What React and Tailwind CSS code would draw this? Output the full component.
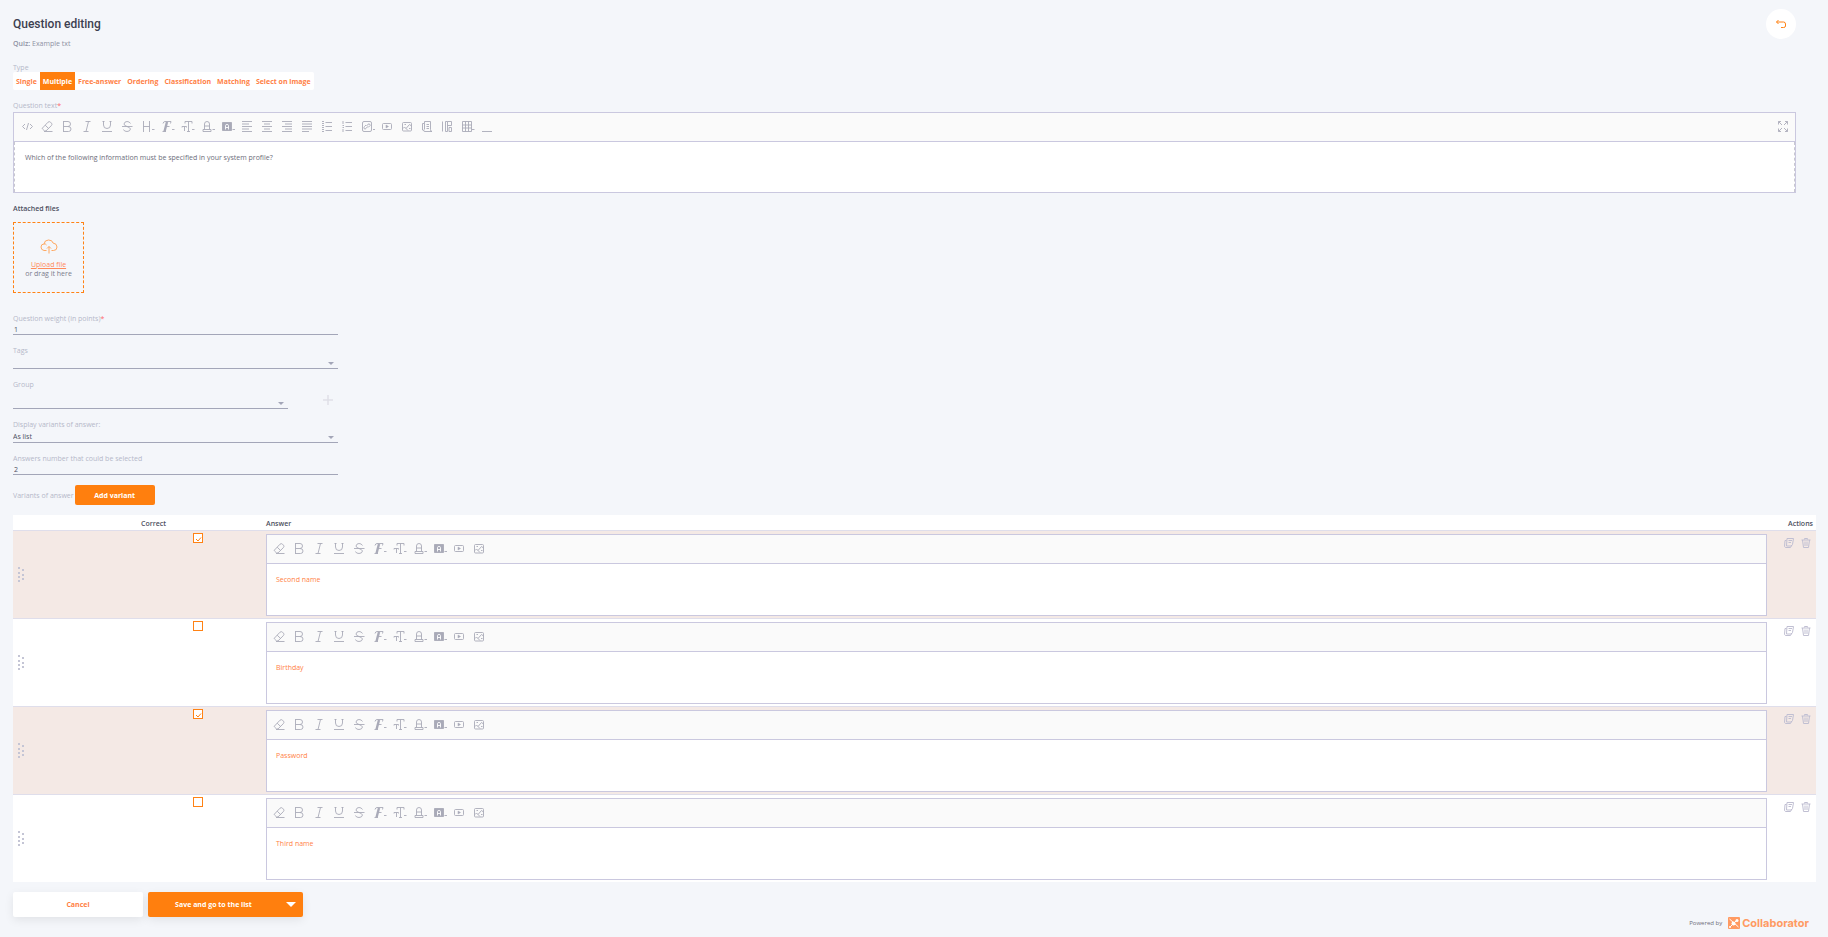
import React from "react";

const font = "font-['Open_Sans',sans-serif]";

const icons = {
  code: <path d="M8 4 5.500 6.500 8 9M13 4 15.500 6.500 13 9M11.500 3 9.500 10" />,
  eraser: (
    <>
      <path d="M5.500 8 11 2.200Q12.300 1 13.500 2.200L14.500 3.200Q15.500 4.500 14.300 5.700L9 10.900H7.500L5.500 9Q5 8.500 5.500 8ZM8.200 5.200 11.600 8.500" />
      <path d="M7 11.500H15.500" />
    </>
  ),
  bold: <path d="M6 1.500H11Q13.500 1.500 13.500 4T11 6.500H6.500M11 6.500Q14 6.500 14 9T11.500 11.500H6M6.500 1.500V11.500" />,
  italic: <path d="M8.500 1.500H13.500M6.500 11.500H11.500M11.500 1.500 9 11.500" />,
  underline: <path d="M6.500 1V5Q6.500 8.500 10 8.500T13.500 5V1M5 11.500H15M5.500 1.500H7.500M12.500 1.500H14.500" />,
  strike: <path d="M13.500 3.500Q12.500 1.500 10 1.500T7 4Q7 5.500 10 6.500T13.500 9Q13 11.500 10 11.500T6.500 9.500M5 6.500H15.500" />,
  heading: <path d="M6.500 1V12M12.500 1V12M6.500 6.500H12.500M15 9.500H17.500" />,
  font: (
    <>
      <path d="M6 3.500Q6.500 1.500 8 1.500H14L13.500 3.500M9 6.500H12.500M5.500 11.500H9" />
      <path strokeWidth="2.400" d="M10 2 7.500 11.500" />
      <path d="M15 9.500H17.500" />
    </>
  ),
  size: <path d="M8 3.500V1.500H15V3.500M11.500 1.500V11.500M10 11.500H13M5 7.500V6.500H9.500V7.500M7.500 6.500V11M15 9.500H17.500" />,
  color: <path d="M7.500 9.500V4Q7.500 1.500 10 1.500T12.500 4V9.500M7.500 6H12.500M6 9.500H14V11.500H6ZM15.500 9.500H18" />,
  background: (
    <>
      <path fill="currentColor" d="M5.500 2.500H14.500V10.500H5.500Z" />
      <path className="stroke-white" d="M8.500 9.500V5.500Q8.500 4.500 10 4.500T11.500 5.500V9.500M8.500 7.500H11.500" />
      <path d="M15.500 9.500H18" />
    </>
  ),
  left: <path d="M5 1.500H15M5 4H12M5 6.500H15M5 9H12M5 11.500H15" />,
  center: <path d="M5 1.500H15M7 4H13M5 6.500H15M7 9H13M5 11.500H15" />,
  right: <path d="M5 1.500H15M8 4H15M5 6.500H15M8 9H15M5 11.500H15" />,
  justify: <path d="M5 1.500H15M5 4H15M5 6.500H15M5 9H15M5 11.500H12" />,
  bullets: <path d="M8.500 2.500H15M8.500 6.500H15M8.500 10.500H15M5 1.500H7M5 3.500H7M5 5.500H7M5 7.500H7M5 9.500H7M5 11.500H7" />,
  numbers: <path d="M8.500 2.500H15M8.500 6.500H15M8.500 10.500H15M6 1V4M5.500 5.500H7M5.500 7.500H7M6 9V12" />,
  link: (
    <>
      <rect x="5.500" y="1.500" width="9" height="10" rx="1.500" />
      <path d="M9.500 6 11 4.200Q12 3.500 13 4.500T12.500 6L11 7.500M10.500 6.500 9 8.500Q8 9.500 7.200 8.700T7.500 6.500L9 5M16 9.500H18" />
    </>
  ),
  video: (
    <>
      <rect x="5.500" y="3.500" width="9" height="6" rx="1" />
      <path fill="currentColor" strokeWidth="0.500" d="M9 5 11.500 6.500 9 8Z" />
    </>
  ),
  image: (
    <>
      <rect x="5.500" y="2.500" width="9" height="8.500" rx="1" />
      <path d="M6 8.500 7.500 7 11 10.500M9 8.500 12.500 4.500 14.500 6M7.500 4.500H9M12 8.500H13.500" />
    </>
  ),
  template: <path d="M7.500 1.500H13.500V9.500Q13.500 11.500 15 11.500H8Q6.500 11.500 6.500 10H5.500V3.500H7.500ZM7.500 3.500V9.500M9.500 4.500H12M9.500 6.500H12M9.500 8.500H12" />,
  layout: <path d="M5.500 1.500V11.500M8.500 1.500V11.500H10.500V1.500ZM10.500 5.500H14.500V1.500H10.500M12 7.500H14.500V11.500H12Z" />,
  table: <path d="M5.500 1.500H14.500V11.500H5.500ZM8.500 1.500V11.500M11.500 1.500V11.500M5.500 5H14.500M5.500 8H14.500M15 9.500H17.500" />,
  line: <path d="M5 11.500H15" />,
};

const questionTools = [
  "code", "eraser", "bold", "italic", "underline", "strike", "heading", "font",
  "size", "color", "background", "left", "center", "right", "justify", "bullets",
  "numbers", "link", "video", "image", "template", "layout", "table", "line",
];

const answerTools = [
  "eraser", "bold", "italic", "underline", "strike", "font", "size", "color",
  "background", "video", "image",
];

const types = ["Single", "Multiple", "Free-answer", "Ordering", "Classification", "Matching", "Select on image"];

const answers = [
  { text: "Second name", correct: true },
  { text: "Birthday", correct: false },
  { text: "Password", correct: true },
  { text: "Third name", correct: false },
];

const Tool = ({ name }) => (
  <button type="button" aria-label={name} className="w-5 h-[13px] text-[#a9aab8]">
    <svg viewBox="0 0 20 13" className="w-5 h-[13px]" fill="none" stroke="currentColor" strokeWidth="0.9">
      {icons[name]}
    </svg>
  </button>
);

const Caret = () => (
  <svg viewBox="0 0 6 3" className="absolute right-1 bottom-1 w-[6px] h-[3px] pointer-events-none" fill="#a3a6b8">
    <path d="M0 0H6L3 3Z" />
  </svg>
);

const Label = ({ htmlFor, children, required }) => (
  <label htmlFor={htmlFor} className="block leading-[9px] text-[#b5b8c9]">
    {children}
    {required && <span className="text-red-400">*</span>}
  </label>
);

const SelectField = ({ id, label, options, tall }) => (
  <div>
    <Label htmlFor={id}>{label}</Label>
    <div className="relative">
      <select
        id={id}
        className={`block w-full appearance-none pt-px border-b border-[#a3a6b8] text-[#4d4f60] outline-none ${tall ? "h-5" : "h-[14px]"}`}
      >
        {options.map((option) => (
          <option key={option}>{option}</option>
        ))}
      </select>
      <Caret />
    </div>
  </div>
);

const InputField = ({ id, label, value, required }) => (
  <div>
    <Label htmlFor={id} required={required}>{label}</Label>
    <input id={id} defaultValue={value} className="block w-full h-3 pt-px pl-px border-b border-[#a3a6b8] text-[#4d4f60] outline-none" />
  </div>
);

const AnswerRow = ({ answer, index }) => {
  const cell = `border-t border-[#dfdeeb] p-0 ${answer.correct ? "bg-[#f4e9e5]" : "bg-white"}`;

  return (
    <tr>
      <td className={`${cell} align-middle`}>
        <svg viewBox="0 0 7 16" className="ml-[5px] w-[7px] h-4" fill="#c4c5d5">
          <path d="M0 0h2v2h-2zM0 5h2v2h-2zM0 9h2v2h-2zM0 13h2v2h-2zM4 2h2v2h-2zM4 7h2v2h-2zM4 11h2v2h-2z" />
        </svg>
      </td>
      <td className={`${cell} align-top pt-[2px]`}>
        <label className="relative block mx-auto w-[10px] h-[10px]">
          <input
            type="checkbox"
            aria-label={`${answer.text} is correct`}
            defaultChecked={answer.correct}
            className="peer block w-[10px] h-[10px] appearance-none border border-[#ff8214] bg-white"
          />
          <svg
            viewBox="0 0 10 10"
            className="absolute inset-0 hidden peer-checked:block pointer-events-none"
            fill="none"
            stroke="#ff8214"
          >
            <path d="M3 6 5 8 8 4.500" />
          </svg>
        </label>
      </td>
      <td className={`${cell} align-top pl-[7px] pt-[3px] pb-[2px]`}>
        <div className="border border-[#cac8df] bg-white">
          <div className="flex items-start h-[29px] pt-[7px] pl-[2px] bg-[#fafafa] border-b border-[#cac8df]">
            {answerTools.map((name) => (
              <Tool key={name} name={name} />
            ))}
          </div>
          <textarea
            aria-label={`Answer ${index + 1}`}
            defaultValue={answer.text}
            className="block w-full h-[51px] px-[9px] pt-[11px] resize-none outline-none leading-[9px] font-medium text-[#ff7f45]"
          />
        </div>
      </td>
      <td className={`${cell} align-top pt-[7px]`}>
        <div className="flex justify-end gap-[7px] pr-[5px] text-[#c0bfd2]">
          <button type="button" aria-label="Copy">
            <svg viewBox="0 0 10 10" className="w-[10px] h-[10px]" fill="none" stroke="currentColor">
              <path d="M3 .5H9.500L8.500 6.500 7 8H2.500ZM2.500 2.500H1L.5 8.500Q1 9.500 2 9.500H6.500L8 7M4.500 2.500H8M4.500 4.500H7" />
            </svg>
          </button>
          <button type="button" aria-label="Delete">
            <svg viewBox="0 0 10 10" className="w-[10px] h-[10px]" fill="none" stroke="currentColor">
              <path d="M.5 2H9.500M3.500 1.500V.5H6.500V1.500M1.500 2 2.500 9.500H7.500L8.500 2M4 3.500V8M6 3.500V8" />
            </svg>
          </button>
        </div>
      </td>
    </tr>
  );
};

const App = () => {
  return (
    <div className={`min-h-screen bg-[#f4f6fa] pl-[13px] pr-3 pt-[9px] text-[7px] leading-[9px] text-[#4d4f60] ${font}`}>
      <div className="pr-5">
        {/* Header */}
        <header className="flex items-center justify-between h-[30px]">
          <h1 className="font-[Roboto,sans-serif] text-[12px] font-medium text-[#3d3f50]">Question editing</h1>
          <button type="button" aria-label="Back" className="flex items-center justify-center w-[30px] h-[30px] rounded-full bg-white">
            <svg viewBox="0 0 10 10" className="w-[10px] h-[10px]" fill="none" stroke="#ff8214">
              <path d="M2.500 1 .5 3 2.500 5M.5 3H7.500Q9.500 3 9.500 5V7Q9.500 8.500 7.500 8.500H5" />
            </svg>
          </button>
        </header>
        <p className="text-[#8e91a3]">
          <b className="font-semibold">Quiz:</b> Example txt
        </p>

        {/* Question type */}
        <div className="mt-[15px] text-[#b5b8c9]">Type</div>
        <div className="inline-flex h-[18px] rounded-xs bg-white">
          {types.map((type) => (
            <button
              key={type}
              type="button"
              className={`px-[3px] font-bold ${type === "Multiple" ? "bg-[#ff7f0e] text-white" : "text-[#ff7f45]"}`}
            >
              {type}
            </button>
          ))}
        </div>

        {/* Question text */}
        <div className="mt-[11px]">
          <Label htmlFor="question" required>Question text</Label>
          <div className="mt-[2px] border border-[#cac8df] bg-white">
            <div className="flex items-start h-[29px] pt-[7px] pl-[3px] pr-[7px] bg-[#fafafa] border-b border-[#cac8df]">
              {questionTools.map((name) => (
                <Tool key={name} name={name} />
              ))}
              <button type="button" aria-label="Full screen" className="ml-auto pt-px text-[#b3b3c0]">
                <svg viewBox="0 0 10 11" className="w-[10px] h-[11px]" fill="none" stroke="currentColor">
                  <path d="M.5 3.500V.5H3M.5.5 4 4M7 .5H9.500V3.500M9.500.5 6 4M.5 7.500V10.500H3M.5 10.500 4 7M7 10.500H9.500V7.500M9.500 10.500 6 7" />
                </svg>
              </button>
            </div>
            <textarea
              id="question"
              defaultValue="Which of the following information must be specified in your system profile?"
              className="block w-full h-[50px] px-[10px] pt-[11px] resize-none outline-none border-x border-dashed border-[#c8c8d0] text-[#6c6d7a]"
            />
          </div>
        </div>

        {/* Attached files */}
        <h2 className="mt-[11px] font-semibold">Attached files</h2>
        <div className="mt-[9px] flex flex-col items-center justify-center w-[71px] h-[71px] pt-[2px] border border-dashed border-[#ff8214] text-[#7a7c8c]">
          <svg viewBox="0 0 18 15" className="mb-[6px] w-[18px] h-[15px]" fill="none" stroke="#ff9f50" strokeWidth="0.900">
            <path d="M6.500 11.500H4Q1 11 1 8T4 5Q4.500 1 8.500 1T13 4Q17 4.500 17 8T13.500 11.500H11.500M4 5Q5.500 4.500 6.500 6M9 14.500V7.500M7 9.500 9 7.500 11 9.500" />
          </svg>
          <a href="#upload" className="text-[#ff8a5a] underline">Upload file</a>
          <span>or drag it here</span>
        </div>
      </div>

      {/* Settings */}
      <div className="mt-[21px] flex flex-col gap-[11px] w-[325px]">
        <InputField id="weight" label="Question weight (in points)" value="1" required />
        <SelectField id="tags" label="Tags" options={[""]} />
        <div className="flex items-center justify-between">
          <div className="w-[275px]">
            <SelectField id="group" label="Group" options={[""]} tall />
          </div>
          <button type="button" aria-label="Add group" className="pt-[10px] mr-[5px]">
            <svg viewBox="0 0 10 10" className="w-[10px] h-[10px]" fill="none" stroke="#dfe0e7" strokeWidth="1.500">
              <path d="M5 0V10M0 5H10" />
            </svg>
          </button>
        </div>
        <SelectField id="display" label="Display variants of answer:" options={["As list", "As drop-down"]} />
        <InputField id="count" label="Answers number that could be selected" value="2" />
      </div>

      {/* Variants of answer */}
      <div className="mt-[10px] flex items-center gap-px">
        <span className="text-[#b5b8c9]">Variants of answer</span>
        <button type="button" className="w-20 h-5 rounded-xs bg-[#ff7f0e] font-bold text-white">Add variant</button>
      </div>
      <table className="mt-[10px] w-full table-fixed border-separate border-spacing-0">
        <thead>
          <tr className="h-[15px] bg-white text-left">
            <th className="w-[124px] p-0" />
            <th className="w-[122px] p-0 pt-[2px] pl-1 font-semibold">Correct</th>
            <th className="p-0 pt-[2px] pl-[7px] font-semibold">Answer</th>
            <th className="w-[49px] p-0 pt-[2px] pr-[3px] font-semibold text-right">Actions</th>
          </tr>
        </thead>
        <tbody>
          {answers.map((answer, index) => (
            <AnswerRow key={answer.text} answer={answer} index={index} />
          ))}
        </tbody>
      </table>

      {/* Footer */}
      <footer className="flex items-start justify-between pt-[10px] pr-[7px]">
        <div className="flex gap-[5px] font-bold">
          <button type="button" className="w-[130px] h-[25px] rounded-xs bg-white text-[#ff7f45] shadow-[0_3px_10px_rgba(0,0,0,0.08)]">Cancel</button>
          <div className="flex w-[155px] h-[25px] rounded-xs bg-[#ff7f0e] text-white shadow-[0_3px_10px_rgba(0,0,0,0.08)]">
            <button type="button" className="flex-1">Save and go to the list</button>
            <button type="button" aria-label="More save options" className="w-6">
              <svg viewBox="0 0 10 5" className="mx-auto w-[10px] h-[5px]" fill="currentColor">
                <path d="M0 0H10L5 5Z" />
              </svg>
            </button>
          </div>
        </div>
        <div className="flex items-center mt-[25px]">
          <span className="mr-[6px] text-[6px] text-[#6c6d7a]">Powered by</span>
          <svg viewBox="0 0 12 12" className="mr-[2px] w-3 h-3">
            <rect width="12" height="12" rx="1" fill="#ff9a62" />
            <path d="M1.500 2 6 6 2 10M6 6 9 3M6 6 10.500 10" fill="none" stroke="#fff" strokeWidth="1" />
            <circle cx="5.500" cy="6.500" r="2" fill="#fff" />
            <circle cx="9" cy="3.500" r="1.500" fill="#fff" />
            <circle cx="2" cy="10" r="1" fill="#fff" />
          </svg>
          <span className="font-[Inter,sans-serif] text-[11px] leading-3 font-bold text-[#ff9a62]">Collaborator</span>
        </div>
      </footer>
    </div>
  );
};

export default App;
